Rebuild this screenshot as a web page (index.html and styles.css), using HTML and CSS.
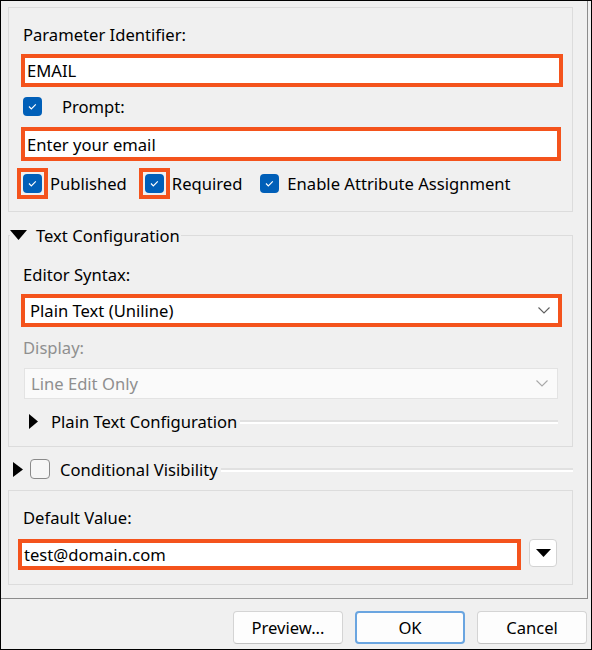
FILE: index.html
```html
<!DOCTYPE html>
<html>

<head>
    <title>Parameter Properties</title>
    <link rel="stylesheet" href="styles.css">
</head>

<body>
    <div class="dialog">
        <div class="scroll">
            <div class="group group-main">
                <div class="label">Parameter Identifier:</div>
                <div class="field hl field-id">EMAIL</div>
                <div class="prompt-row">
                    <span class="check on"><svg width="19" height="19" viewBox="0 0 19 19"><polyline points="6,9.5 8.3,11.8 12.8,7.3" /></svg></span>
                    <span class="prompt-text">Prompt:</span>
                </div>
                <div class="field hl field-prompt">Enter your email</div>
                <div class="check-row">
                    <span class="opt"><span class="mark"><span class="check on"><svg width="19" height="19" viewBox="0 0 19 19"><polyline points="6,9.5 8.3,11.8 12.8,7.3" /></svg></span></span>Published</span>
                    <span class="opt"><span class="mark"><span class="check on"><svg width="19" height="19" viewBox="0 0 19 19"><polyline points="6,9.5 8.3,11.8 12.8,7.3" /></svg></span></span>Required</span>
                    <span class="opt"><span class="check on"><svg width="19" height="19" viewBox="0 0 19 19"><polyline points="6,9.5 8.3,11.8 12.8,7.3" /></svg></span>Enable Attribute Assignment</span>
                </div>
            </div>

            <fieldset class="section">
                <legend><svg class="tri" width="17" height="10" viewBox="0 0 17 10"><polygon points="0,0 17,0 8.5,10" /></svg>Text Configuration</legend>
                <div class="section-body">
                    <div class="label">Editor Syntax:</div>
                    <div class="combo hl">
                        <span>Plain Text (Uniline)</span>
                        <svg width="12" height="7" viewBox="0 0 12 7"><polyline points="0.5,0.5 6,6 11.5,0.5" /></svg>
                    </div>
                    <div class="label disabled">Display:</div>
                    <div class="combo combo-off">
                        <span>Line Edit Only</span>
                        <svg width="12" height="7" viewBox="0 0 12 7"><polyline points="0.5,0.5 6,6 11.5,0.5" /></svg>
                    </div>
                    <div class="sub-row">
                        <svg class="tri" width="9" height="15" viewBox="0 0 9 15"><polygon points="0,0 9,7.5 0,15" /></svg>
                        <span class="sub-title">Plain Text Configuration</span>
                        <span class="rule"></span>
                    </div>
                </div>
            </fieldset>

            <div class="visibility-row">
                <svg class="tri" width="10" height="15" viewBox="0 0 10 15"><polygon points="0,0 10,7.5 0,15" /></svg>
                <span class="check off"></span>
                <span class="sub-title">Conditional Visibility</span>
                <span class="rule"></span>
            </div>

            <div class="group group-default">
                <div class="label">Default Value:</div>
                <div class="default-row">
                    <div class="field hl field-default">test@domain.com</div>
                    <div class="drop-btn"><svg width="15" height="8" viewBox="0 0 15 8"><polygon points="0,0 15,0 7.5,8" /></svg></div>
                </div>
            </div>
        </div>

        <div class="buttons">
            <button class="btn">Preview...</button>
            <button class="btn btn-default">OK</button>
            <button class="btn">Cancel</button>
        </div>
    </div>
</body>

</html>
```

FILE: styles.css
```css
body {
    margin: 0;
    font-family: "Noto Sans", "Open Sans", sans-serif;
    font-size: 16.6px;
    color: #000;
}

.dialog {
    width: 592px;
    height: 650px;
    box-sizing: border-box;
    border: 1px solid #000;
    background: #f0f0f0;
    display: flex;
    flex-direction: column;
}

.scroll {
    width: 587px;
    height: 598px;
    box-sizing: border-box;
    border-right: 1px solid #8c8c8c;
    border-bottom: 1px solid #8c8c8c;
    padding: 6px 0 0 7px;
    display: flex;
    flex-direction: column;
}

.group {
    width: 565px;
    box-sizing: border-box;
    border: 1px solid #dcdcdc;
}

.label {
    height: 26px;
    line-height: 26px;
    padding-left: 2px;
}

.label.disabled {
    color: #8f8f8f;
}

/* orange highlight from the screenshot annotation */
.hl {
    border: 4px solid #f4531c !important;
}

.mark {
    display: flex;
    border: 4px solid #f4531c;
    padding: 2px;
    margin: -6px;
}

.field {
    box-sizing: border-box;
    background: #fff;
    border: 1px solid #c8c8c8;
    padding: 0 2px;
    display: flex;
    align-items: center;
    white-space: nowrap;
}

.group-main {
    padding: 14px 9px 12px 12px;
}

.field-id {
    margin-top: 6px;
    height: 33px;
}

.prompt-row {
    margin-top: 5px;
    height: 28px;
    display: flex;
    align-items: center;
    padding-left: 2px;
}

.prompt-text {
    margin-left: 20px;
}

.field-prompt {
    margin-top: 7px;
    margin-right: 2px;
    height: 34px;
}

.check-row {
    margin-top: 6px;
    height: 32px;
    display: flex;
    align-items: center;
    padding-left: 2px;
    gap: 18px;
}

.opt {
    display: flex;
    align-items: center;
    gap: 8px;
}

.check {
    width: 19px;
    height: 19px;
    box-sizing: border-box;
    border-radius: 4px;
    flex: none;
    display: block;
}

.check svg {
    display: block;
}

.check.on {
    background: #005fb8;
}

.check.on polyline {
    fill: none;
    stroke: #fff;
    stroke-width: 1.2;
}

.check.off {
    width: 20px;
    height: 20px;
    border: 1px solid #8a8a8a;
    background: #f6f6f6;
}

.tri {
    display: block;
    flex: none;
}

.tri polygon {
    fill: #000;
}

/* collapsible group */
.section {
    width: 565px;
    box-sizing: border-box;
    margin: 11px 0 0 0;
    padding: 0;
    border: 1px solid #dcdcdc;
    min-inline-size: 0;
}

.section legend {
    display: flex;
    align-items: center;
    gap: 9px;
    height: 24px;
    padding: 0 1px 0 0;
    margin-left: 1px;
}

.section-body {
    padding: 15px 10px 12px 12px;
}

.combo {
    box-sizing: border-box;
    height: 33px;
    margin-top: 6px;
    background: #fff;
    display: flex;
    align-items: center;
    justify-content: space-between;
    padding: 0 8px 0 5px;
}

.combo polyline {
    fill: none;
    stroke: #5f5f5f;
    stroke-width: 1.1;
}

.combo-off {
    height: 31px;
    margin: 7px 4px 0 3px;
    background: #fafafa;
    border: 1px solid #e3e3e3;
    color: #8f8f8f;
    padding: 0 9px 0 6px;
}

.combo-off polyline {
    stroke: #a8a8a8;
}

.label.disabled {
    margin-top: 8px;
}

.sub-row {
    margin-top: 9px;
    height: 26px;
    display: flex;
    align-items: center;
    padding-left: 8px;
    padding-right: 4px;
}

.sub-title {
    margin-left: 13px;
    white-space: nowrap;
}

.rule {
    flex: 1;
    margin-left: 3px;
    margin-top: 2px;
    border-top: 2px solid #e1e1e1;
    border-bottom: 2px solid #fff;
}

.visibility-row {
    margin-top: 9px;
    width: 565px;
    height: 26px;
    display: flex;
    align-items: center;
    padding-left: 5px;
    box-sizing: border-box;
}

.visibility-row .check {
    margin-left: 7px;
}

.visibility-row .sub-title {
    margin-left: 10px;
}

.group-default {
    margin-top: 8px;
    padding: 14px 0 14px 9px;
}

.group-default .label {
    padding-left: 5px;
}

.default-row {
    margin-top: 8px;
    display: flex;
    align-items: flex-start;
    gap: 8px;
}

.field-default {
    width: 503px;
    height: 31px;
}

.drop-btn {
    width: 28px;
    height: 28px;
    box-sizing: border-box;
    background: #fff;
    border: 1px solid #d3d3d3;
    border-radius: 4px;
    display: flex;
    align-items: center;
    justify-content: center;
}

.drop-btn polygon {
    fill: #000;
}

.buttons {
    display: flex;
    justify-content: flex-end;
    gap: 12px;
    padding: 12px 4px 0 0;
}

.btn {
    width: 110px;
    height: 33px;
    box-sizing: border-box;
    font-family: inherit;
    font-size: inherit;
    color: #000;
    background: #fdfdfd;
    border: 1px solid #d4d4d4;
    border-bottom-color: #c2c2c2;
    border-radius: 4px;
    padding: 0;
}

.btn-default {
    border: 2px solid #6aa5e0;
}
```
